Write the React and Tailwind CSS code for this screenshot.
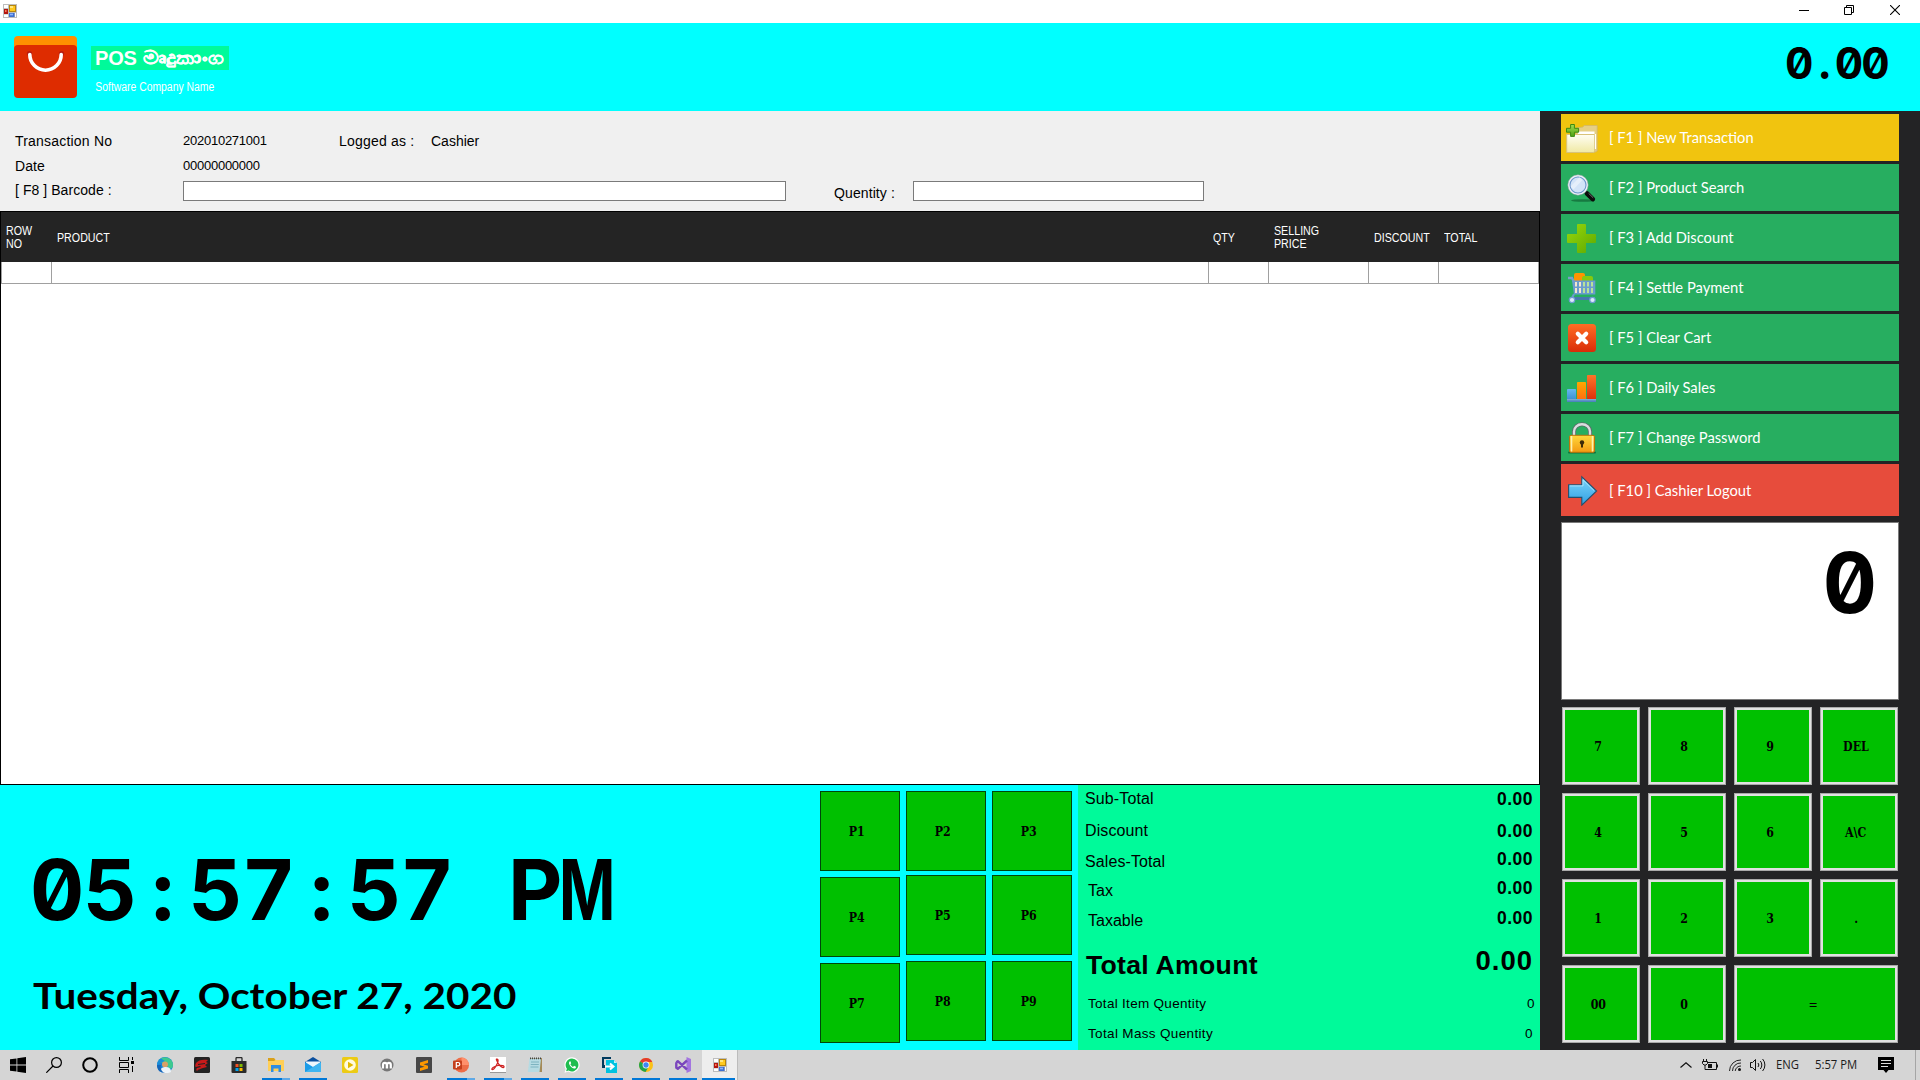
import React from 'react';

const SANS = "font-['Liberation_Sans',sans-serif]";

/* ---------- title bar ---------- */
function FormIcon({ className }) {
  return (
    <svg className={className} viewBox="0 0 14 14">
      <rect width="14" height="14" fill="#bdbdbd" />
      <rect x="1" y="1" width="4" height="3" fill="#fff" />
      <rect x="1" y="10.5" width="4" height="2.5" fill="#fff" />
      <rect x="12" y="9" width="1" height="4" fill="#fff" />
      <rect x="1" y="5" width="4" height="5" fill="#b3160f" />
      <rect x="2" y="6" width="1.5" height="2" fill="#ff7a5c" />
      <rect x="6" y="1" width="7" height="7" fill="#b8860b" />
      <rect x="7" y="2" width="5" height="5" fill="#ffc91f" />
      <rect x="7" y="2" width="3" height="2" fill="#ffe680" />
      <rect x="6" y="9" width="5.5" height="4" fill="#3f6fd1" />
      <rect x="7" y="9.7" width="3" height="1.6" fill="#8db5fa" />
    </svg>
  );
}

function TitleBar() {
  return (
    <div className="flex h-[23px] shrink-0 items-start justify-between bg-white pl-[3px] pr-5">
      <FormIcon className="mt-1 size-[14px]" />
      <div className="mt-[5px] flex gap-[35px]">
        <svg className="size-[10px]" viewBox="0 0 10 10"><path d="M0 5.5h10" stroke="#000" /></svg>
        <svg className="size-[10px]" viewBox="0 0 10 10" fill="none" stroke="#000"><path d="M.5 2.5h7v7h-7zM2.5 2.500v-2h7v7h-2" /></svg>
        <svg className="ml-[1px] size-[10px]" viewBox="0 0 10 10"><path d="M0 0l10 10M10 0L0 10" stroke="#000" strokeWidth="1.1" /></svg>
      </div>
    </div>
  );
}

/* ---------- header ---------- */
function Header() {
  return (
    <div className="flex h-[88px] shrink-0 items-start bg-[#00ffff] pl-[14px] pr-8">
      <svg className="mt-[13px] h-[62px] w-[63px]" viewBox="0 0 63 62">
        <rect width="63" height="30" rx="4" fill="#ff9000" />
        <path d="M0 13a4 4 0 0 1 4-4h55a4 4 0 0 1 4 4v45a4 4 0 0 1-4 4H4a4 4 0 0 1-4-4z" fill="#de2c00" />
        <circle cx="15.500" cy="17.500" r="2.600" fill="#b81c10" />
        <circle cx="47.500" cy="17.500" r="2.600" fill="#b81c10" />
        <path d="M15.800 18.500a15.700 15.700 0 0 0 31.400 0" fill="none" stroke="#fff" strokeWidth="3.600" strokeLinecap="round" />
      </svg>
      <div className={`ml-[14px] mt-[23px] flex flex-col items-start text-white ${SANS}`}>
        <div className="flex h-6 w-[138px] items-center whitespace-nowrap bg-[#00fa9a] pl-[4px] text-[20px] font-bold leading-6">
          <span className="tracking-[-0.2px]">POS</span>
          <span className="ml-[6px] origin-left scale-x-[1.22] text-[18px] [-webkit-text-stroke:0.2px_white]">මෘදුකාංග</span>
        </div>
        <div className="mt-[11px] origin-left scale-x-[0.865] whitespace-nowrap pl-[5px] text-[12px] leading-3">Software Company Name</div>
      </div>
      <div className="ml-auto mt-4 font-[Inter,sans-serif] text-[44px] font-bold leading-[48px] tracking-[-1.8px] tabular-nums slashed-zero">
        0<span className="pl-[7px] pr-[6px]">.</span>00
      </div>
    </div>
  );
}

/* ---------- transaction form ---------- */
function TransactionForm() {
  return (
    <div className={`flex h-[100px] shrink-0 bg-[#f0f0f0] pl-[15px] text-[14px] leading-5 text-black ${SANS}`}>
      <div className="w-[168px] pt-5">
        <div className="tracking-[0.2px]">Transaction No</div>
        <div className="mt-[5px] tracking-[0.1px]">Date</div>
        <div className="mt-[4px] tracking-[0.06px]">[ F8 ] Barcode :</div>
      </div>
      <div className="w-[651px] pt-5">
        <div className="flex">
          <span className="w-[156px] text-[13px] tracking-[-0.25px]">202010271001</span>
          <span className="w-[92px] tracking-[0.2px]">Logged as :</span>
          <span>Cashier</span>
        </div>
        <div className="mt-[5px] text-[13px] tracking-[-0.25px]">00000000000</div>
        <input aria-label="Barcode" className="mt-[5px] block h-5 w-[603px] border border-[#7a7a7a] bg-white" />
      </div>
      <div className="flex w-[79px] items-end pb-2 tracking-[0.1px]">Quentity :</div>
      <input aria-label="Quantity" className="mt-[70px] h-5 w-[291px] border border-[#7a7a7a] bg-white" />
    </div>
  );
}

/* ---------- cart table ---------- */
function Head({ children, first }) {
  return (
    <div className={`flex items-center ${first ? 'pl-[5px]' : 'pl-[6px]'} pt-[2px] text-[12px] leading-[13px] text-white`}>
      <span className="origin-left scale-x-[0.89]">{children}</span>
    </div>
  );
}

function CartTable() {
  const cols = 'grid grid-cols-[50px_1157px_60px_100px_70px_101px]';
  const rowCols = 'grid grid-cols-[50px_1157px_60px_100px_70px_100px]';
  return (
    <div className={`flex h-[574px] shrink-0 flex-col border border-black bg-white ${SANS}`}>
      <div className={`${cols} h-[50px] bg-[#242424]`}>
        <Head first>ROW<br />NO</Head>
        <Head>PRODUCT</Head>
        <Head first>QTY</Head>
        <Head>SELLING<br />PRICE</Head>
        <Head>DISCOUNT</Head>
        <Head>TOTAL</Head>
      </div>
      <div className={`${rowCols} h-[22px] border-b border-l border-[#a0a0a0]`}>
        {[0, 1, 2, 3, 4, 5].map((i) => (
          <div key={i} className="border-r border-[#a0a0a0]" />
        ))}
      </div>
    </div>
  );
}

/* ---------- bottom area ---------- */
function Clock() {
  return (
    <div className="w-[820px] text-black">
      <div className="ml-[30px] mt-[57px] whitespace-nowrap font-[Inter,sans-serif] text-[84px] font-bold leading-[96px] tracking-[-1.4px] tabular-nums slashed-zero [word-spacing:34px]">
        05<span className="px-[15.8px]">:</span>57<span className="px-[15.8px]">:</span>57 P<span className="-ml-[2px] inline-block origin-left scale-x-[0.72]">M</span>
      </div>
      <div className="ml-[33px] mt-[35px] w-max origin-left scale-x-[1.093] whitespace-nowrap font-[Lato,sans-serif] text-[37px] font-bold leading-[44px]">
        Tuesday, October 27, 2020
      </div>
    </div>
  );
}

function PButton({ children }) {
  return (
    <button className="flex size-20 items-center justify-center border border-[#00460a] bg-[#00c000] pr-[6px] pt-[2px] font-['DejaVu_Serif',serif] text-[12px] font-bold text-black">
      <span className="scale-x-[0.92]">{children}</span>
    </button>
  );
}

function QuickPad() {
  return (
    <div className="flex w-[258px] gap-[6px] pt-[6px]">
      {[['P1', 'P4', 'P7'], ['P2', 'P5', 'P8'], ['P3', 'P6', 'P9']].map((col, i) => (
        <div key={i} className={i === 0 ? 'flex flex-col gap-[6px]' : 'flex flex-col gap-[6px] [&>*:nth-child(2)]:-mt-[2px]'}>
          {col.map((p) => <PButton key={p}>{p}</PButton>)}
        </div>
      ))}
    </div>
  );
}

function Totals() {
  return (
    <div className={`flex w-[462px] justify-between bg-[#00fa9a] text-[16px] leading-6 text-black ${SANS}`}>
      <div className="pl-[7px]">
        <div className="mt-[2px] tracking-[0.13px]">Sub-Total</div>
        <div className="mt-[8px] tracking-[0.1px]">Discount</div>
        <div className="mt-[7px] tracking-[0.1px]">Sales-Total</div>
        <div className="ml-[3px] mt-[5px]">Tax</div>
        <div className="ml-[3px] mt-[6px]">Taxable</div>
        <div className="ml-[1px] mt-[20px] text-[26.67px] font-bold tracking-[0.25px]">Total Amount</div>
        <div className="ml-[3px] mt-[15px] text-[13.5px] tracking-[0.3px]">Total Item Quentity</div>
        <div className="ml-[3px] mt-[6px] text-[13.5px] tracking-[0.34px]">Total Mass Quentity</div>
      </div>
      <div className="pr-[7px] text-right font-bold tracking-[0.5px]">
        <div className="mt-[2px] text-[17.500px]">0.00</div>
        <div className="mt-[8px] text-[17.500px]">0.00</div>
        <div className="mt-[4px] text-[17.500px]">0.00</div>
        <div className="mt-[5px] text-[17.500px]">0.00</div>
        <div className="mt-[6px] text-[17.500px]">0.00</div>
        <div className="mt-[19px] text-[27.500px] tracking-[1px]">0.00</div>
        <div className="-mr-[2px] mt-[19px] text-[13.5px] font-normal">0</div>
        <div className="mt-[6px] text-[13.5px] font-normal">0</div>
      </div>
    </div>
  );
}

/* ---------- side menu icons ---------- */
function Gradient({ id, from, to }) {
  return (
    <linearGradient id={id} x1="0" y1="0" x2="0" y2="1">
      <stop offset="0" stopColor={from} />
      <stop offset="1" stopColor={to} />
    </linearGradient>
  );
}

const icons = {
  folder: (
    <>
      <defs><Gradient id="fo" from="#fffef4" to="#f0e9a4" /><Gradient id="fp" from="#a5dd4e" to="#4fa315" /></defs>
      <path d="M17 5l1-1.500h13.200V29l-2.200 1.200H10V6z" fill="#e6cf85" stroke="#d3b868" strokeWidth=".8" />
      <path d="M12 9.500h16.500v5H12z" fill="#fff" />
      <path d="M.7 12.500h28V29l-1 1.500H.7z" fill="url(#fo)" stroke="#d8c37a" />
      <path d="M29.500 12v15" stroke="#fff" strokeWidth="1.200" />
      <path d="M4.600 2.500h3.800V6.300h4.200v3.900H8.400v4.200H4.600v-4.200H.5V6.300h4.100z" fill="url(#fp)" stroke="#3f8a12" />
    </>
  ),
  search: (
    <>
      <ellipse cx="17" cy="28.500" rx="12" ry="1.300" fill="#177a41" />
      <path d="M18.500 19l3.200 3" stroke="#b8c0c8" strokeWidth="2" />
      <path d="M21 21.500l5.800 5.600" stroke="#0b0b0b" strokeWidth="4.600" strokeLinecap="round" />
      <path d="M22.600 21.300l4.600 4.500" stroke="#8a8a8a" strokeWidth=".8" />
      <circle cx="12" cy="13" r="9.300" fill="#c9def5" stroke="#eef2f6" strokeWidth="1.800" />
      <circle cx="12" cy="13" r="8" fill="#d3e4f8" stroke="#6f97cc" strokeWidth="1.100" />
      <path d="M6 16L15 6.600" stroke="#eef5fd" strokeWidth="4" opacity=".7" />
      <circle cx="12" cy="13" r="10.200" fill="none" stroke="#8d99a5" strokeWidth=".5" />
    </>
  ),
  plus: (
    <>
      <defs><linearGradient id="pl" x1="0" y1="0" x2="1" y2="1"><stop offset="0" stopColor="#98d80b" /><stop offset="1" stopColor="#5da800" /></linearGradient></defs>
      <path d="M12 2h7a1 1 0 0 1 1 1v9h9a1 1 0 0 1 1 1v7a1 1 0 0 1-1 1h-9v9a1 1 0 0 1-1 1h-7a1 1 0 0 1-1-1v-9H2a1 1 0 0 1-1-1v-7a1 1 0 0 1 1-1h9V3a1 1 0 0 1 1-1z" fill="url(#pl)" />
    </>
  ),
  cart: (
    <>
      <rect x="8" y="1" width="11" height="10" rx="2" fill="#ff9400" />
      <rect x="16" y="4" width="11" height="8" rx="2" fill="#86c90e" />
      <path d="M2 6h4l2 4" fill="none" stroke="#7b9fca" strokeWidth="2.400" />
      <path d="M6 8.500h23.300v14H8z" fill="#6b9bcf" />
      <path d="M10 10v4.500M14 10v4.500M10 16v5M14 16v5" stroke="#f3e6cf" strokeWidth="2" />
      <path d="M18 10v4.500M22 10v4.500M26 10v4.500M18 16v5M22 16v5M26 16v5" stroke="#b8e29a" strokeWidth="2" />
      <path d="M8 22l-2 4" stroke="#6b9bcf" strokeWidth="2" />
      <rect x="5" y="25" width="22" height="3" fill="#4678ae" />
      <circle cx="6" cy="28" r="2.700" fill="#dcebfb" stroke="#6f9bd2" strokeWidth="1.200" />
      <circle cx="26.500" cy="28" r="2.700" fill="#dcebfb" stroke="#6f9bd2" strokeWidth="1.200" />
    </>
  ),
  clear: (
    <>
      <defs><Gradient id="cl" from="#ff6d24" to="#d92c08" /></defs>
      <rect x="2" y="2" width="28" height="28" rx="3.500" fill="url(#cl)" />
      <path d="M11.800 11.800l8.400 8.400M20.200 11.800l-8.400 8.400" stroke="#fff" strokeWidth="4.200" strokeLinecap="round" />
    </>
  ),
  sales: (
    <>
      <defs><Gradient id="b1" from="#65b7f0" to="#3d8fd1" /><Gradient id="b2" from="#ffa800" to="#ff6e10" /><Gradient id="b3" from="#ff7428" to="#dc300a" /></defs>
      <rect x="1" y="17" width="9" height="10.500" rx=".8" fill="url(#b1)" />
      <rect x="11" y="10" width="9" height="17.500" rx=".8" fill="url(#b2)" />
      <rect x="21" y="3" width="9" height="24.500" rx=".8" fill="url(#b3)" />
      <rect x="1" y="27" width="29" height="3" fill="#4d86bd" />
      <rect x="1" y="27.300" width="29" height="1" fill="#8db4dc" />
    </>
  ),
  lock: (
    <>
      <defs><Gradient id="lk" from="#ffd83c" to="#f39a12" /></defs>
      <rect x="2" y="29.500" width="28" height="2" rx="1" fill="#14713c" />
      <path d="M8 14V9.500a8 7.300 0 0 1 16 0V14" fill="none" stroke="#5d6a6a" strokeWidth="4" />
      <path d="M8 14V9.500a8 7.300 0 0 1 16 0V14" fill="none" stroke="#d9dede" strokeWidth="2.400" />
      <rect x="3.500" y="13.300" width="25" height="17" rx="1.500" fill="url(#lk)" stroke="#b9750a" />
      <path d="M5.500 14v15.500M26.500 14v15.500" stroke="#fdf0b0" strokeWidth="1.600" />
      <circle cx="16" cy="20.500" r="2.200" fill="#3c2a08" />
      <path d="M16 20v5.500" stroke="#3c2a08" strokeWidth="2" />
    </>
  ),
  arrow: (
    <>
      <defs><Gradient id="ar" from="#7fd6fb" to="#2f9fe2" /></defs>
      <path d="M2.600 10.700h13.200V2.800L30.600 17 15.800 31.200v-7.800H2.600z" fill="url(#ar)" stroke="#23506e" strokeWidth="1.100" />
      <path d="M3.800 11.900h13.200V5.800L28 16.500" fill="none" stroke="#b6ecff" strokeWidth=".8" />
    </>
  ),
};

function MenuButton({ icon, color, tall, children }) {
  return (
    <button className={`flex ${tall ? 'h-[52px]' : 'h-[47px]'} w-[338px] items-center pl-[5px] text-left font-[Lato,sans-serif] text-[14.72px] text-white ${color}`}>
      <svg className="size-8" viewBox="0 0 32 32">{icons[icon]}</svg>
      <span className="ml-[11px] whitespace-pre">{children}</span>
    </button>
  );
}

function Key({ children, wide }) {
  return (
    <button className={`flex h-[78px] items-center justify-center border border-[#a9a9a9] bg-[#e1e1e1] p-[2px] ${wide ? 'col-span-2' : ''}`}>
      <span className="flex size-full items-center justify-center bg-[#00c000] pr-[6px] pt-[2px] font-['DejaVu_Serif',serif] text-[12px] font-bold text-black">
        <span className="scale-x-[0.92]">{children}</span>
      </span>
    </button>
  );
}

function SidePanel() {
  const green = 'bg-[#27ae60]';
  return (
    <div className="w-[380px] bg-[#232325] pl-[21px] pt-[3px]">
      <div className="flex flex-col gap-[3px]">
        <MenuButton icon="folder" color="bg-[#f1c40f]">[ F1 ] New Transaction</MenuButton>
        <MenuButton icon="search" color={green}>[ F2 ] Product Search</MenuButton>
        <MenuButton icon="plus" color={green}>[ F3 ] Add Discount</MenuButton>
        <MenuButton icon="cart" color={green}>[ F4 ] Settle Payment</MenuButton>
        <MenuButton icon="clear" color={green}>[ F5 ] Clear Cart</MenuButton>
        <MenuButton icon="sales" color={green}>[ F6 ] Daily Sales</MenuButton>
        <MenuButton icon="lock" color={green}>[ F7 ] Change Password</MenuButton>
        <MenuButton icon="arrow" color="bg-[#e74c3c]" tall>[ F10 ] Cashier Logout</MenuButton>
      </div>
      <div className="mt-[6px] h-[178px] w-[338px] border border-[#7a7a7a] bg-white pr-[21px] pt-3 text-right font-[Inter,sans-serif] text-[84px] font-bold leading-[96px] tabular-nums text-black slashed-zero">0</div>
      <div className="ml-[1px] mt-[7px] grid w-[336px] grid-cols-4 gap-2">
        {['7', '8', '9', 'DEL', '4', '5', '6', 'A\\C', '1', '2', '3', '.', '00', '0'].map((k) => <Key key={k}>{k}</Key>)}
        <Key wide><span className="font-normal">=</span></Key>
      </div>
    </div>
  );
}

/* ---------- taskbar ---------- */
function Task({ children, open, split }) {
  return (
    <div className="flex w-[37px] flex-col items-center">
      <svg className="mt-[7px] size-4" viewBox="0 0 16 16">{children}</svg>
      {open && (
        <div className="mt-auto flex h-[2px] w-7 bg-[#0078d7]">
          {split && <div className="ml-auto h-full w-2 bg-[#5ea9e6]" />}
        </div>
      )}
    </div>
  );
}

function Taskbar() {
  return (
    <div className="flex h-[30px] shrink-0 bg-[#d5d5d5]">
      <div className="flex w-[146px] items-start pt-[7px]">
        <svg className="ml-[10px] size-4" viewBox="0 0 16 16"><path d="M0 2.300l6.500-.9v6.200H0zM7.300 1.300L16 0v7.600H7.300zM0 8.400h6.500v6.200L0 13.700zM7.300 8.400H16V16l-8.700-1.300z" /></svg>
        <svg className="ml-5 size-4" viewBox="0 0 16 16" fill="none" stroke="#000" strokeWidth="1.200"><circle cx="10.500" cy="5.500" r="4.900" /><path d="M7 9L.3 15.700" /></svg>
        <svg className="ml-5 size-4" viewBox="0 0 16 16"><circle cx="8" cy="8" r="6.800" fill="none" stroke="#000" strokeWidth="2" /></svg>
        <svg className="ml-5 h-4 w-[17px]" viewBox="0 0 17 16" fill="none" stroke="#000"><path d="M1.500 0v3.500h9V0M1.500 5.500h9v5h-9zM1.500 16v-3.500h9V16M14.500 0v3M14.500 9v6" /><rect x="13" y="4" width="3" height="3" fill="#000" stroke="none" /></svg>
      </div>
      <Task>
        <circle cx="8" cy="8" r="8" fill="#1683d8" />
        <path d="M2 3a8 8 0 0 1 14 5c0 3-2 4-4 4C10 8 7 5 1 6z" fill="#3ec98f" />
        <path d="M4 1.500A8 8 0 0 0 0 8l8-4z" fill="#1a8fd6" />
        <circle cx="8" cy="7.500" r="3" fill="#d9a066" />
        <path d="M3 15c0-4 3-5 6-5s5 2 5 4-3 2-6 2-5 0-5-1z" fill="#eef3f8" />
        <path d="M0 8c0 5 3 8 8 8-3-1-5-4-4-8z" fill="#1565b8" />
      </Task>
      <Task>
        <rect width="16" height="16" rx="1.500" fill="#222" />
        <path d="M2 6c2-3 7-4 12-3l-2 2 2 1-3 2 2 2-4 1c-2 1-5 1-6 3-1-1-1-2 0-3l4-1-1-1-4 1c-1 0-1-2 0-4z" fill="#c81a1a" />
        <path d="M4 7.500l7-1" stroke="#222" />
      </Task>
      <Task>
        <path d="M5 4V1.500a1 1 0 0 1 1-1h4a1 1 0 0 1 1 1V4" fill="none" stroke="#2b2b2b" strokeWidth="1.300" />
        <path d="M.5 4h15v11a1 1 0 0 1-1 1h-13a1 1 0 0 1-1-1z" fill="#2b2b2b" />
        <path d="M4.500 7h3v3h-3z" fill="#f25022" /><path d="M8.500 7h3v3h-3z" fill="#7fba00" />
        <path d="M4.500 11h3v3h-3z" fill="#00a4ef" /><path d="M8.500 11h3v3h-3z" fill="#ffb900" />
      </Task>
      <Task open split>
        <path d="M0 1h6l1.500 2H16v11H0z" fill="#ffcf57" /><path d="M0 1h6l1.500 2L6 4H0z" fill="#d9a01c" />
        <path d="M3 15V8h10v7h-2.500v-3.500h-5V15z" fill="#2f8ee0" />
      </Task>
      <Task open>
        <path d="M0 5l8-5 8 5v3H0z" fill="#0a4f9e" /><path d="M1 4.500h14V9l-7 4-7-4z" fill="#eef6fd" />
        <path d="M0 5l8 5 8-5v10H0z" fill="#1a9be8" /><path d="M0 15L16 5v10z" fill="#50c0f5" opacity=".7" />
      </Task>
      <Task>
        <rect width="16" height="16" rx="1.500" fill="#eccb14" /><circle cx="8" cy="8" r="5.800" fill="#fffbe0" />
        <path d="M6 4.800L11.500 8 6 11.200z" fill="#e2b900" />
      </Task>
      <Task>
        <circle cx="8" cy="8" r="6.500" fill="#777" /><path d="M4 11.500V7.800a1.900 1.900 0 0 1 3.800 0V11.500M8 11.500V7.800a1.900 1.900 0 0 1 3.800 0V11.500" fill="none" stroke="#fff" strokeWidth="2.200" />
      </Task>
      <Task>
        <rect width="16" height="16" rx="1" fill="#474747" />
        <path d="M12 3v3L7.500 7.300 12 8.800v2.700L4 14v-3l4.500-1.300L4 8.200V5.500z" fill="#ff9800" />
      </Task>
      <Task open split>
        <circle cx="8.500" cy="8" r="7.500" fill="#ed6c47" /><path d="M8.500.5A7.500 7.500 0 0 1 16 8H8.500z" fill="#ff8f6b" />
        <rect y="3.500" width="9" height="9" rx="1" fill="#c43e1c" />
        <path d="M3.300 11V5.500h1.800a1.600 1.600 0 0 1 0 3.400H3.500" fill="none" stroke="#fff" strokeWidth="1.200" />
      </Task>
      <Task open split>
        <rect width="16" height="16" fill="#fff" /><path d="M0 15.500h16" stroke="#999" />
        <path d="M7 2c2 0 1 4-1 7-1 2-3 4-4 3.500S4 9 8 8.500s6.500.3 6 1.600S10 10 8 6 6 2 7 2z" fill="none" stroke="#cf2121" strokeWidth="1.200" />
      </Task>
      <Task open>
        <path d="M4 1h11v14H3z" fill="#a48a57" /><path d="M2.500 1.500h11.500L12.500 15H.8z" fill="#b5dbe3" />
        <path d="M4 5h8M3.800 7.500h8M3.500 10h8" stroke="#7db3c0" /><path d="M3 1.300h11" stroke="#444" strokeWidth="1.800" strokeDasharray="1 1" />
      </Task>
      <Task open>
        <path d="M8 .3a7.600 7.600 0 1 1-3.700 14.200L.5 15.700l1.200-3.700A7.600 7.600 0 0 1 8 .3z" fill="#fff" />
        <path d="M8 1.400a6.500 6.500 0 1 1-3.400 12.100l-2.500.7.800-2.500A6.500 6.500 0 0 1 8 1.400z" fill="#1fbd4f" />
        <path d="M5.500 4.500c-2 2 2 7 4.800 7 1.300 0 1.800-1 1.700-1.800l-2-1-1 1.200C8 9.500 6.700 8.200 6.400 7.300l.8-1-.8-2z" fill="#fff" />
      </Task>
      <Task open>
        <path d="M1 0h9v2H3v8H1z" fill="#003a5d" /><path d="M5 3h8l3 3v10H5z" fill="#00c3e0" />
        <path d="M13 3v3h3z" fill="#bdf3fb" /><path d="M1 8h3v3H1z" fill="#003a5d" />
        <path d="M4 9.500h8M9 6.500l3.500 3L9 12.500" fill="none" stroke="#fff" strokeWidth="2" />
      </Task>
      <Task open>
        <circle cx="8" cy="8" r="7" fill="#fbc116" />
        <path d="M8 8L2 4.400A7 7 0 0 1 14.300 5H8z" fill="#e33b2e" /><path d="M2 4.400A7 7 0 0 0 7.500 15l2.700-4.500L8 8z" fill="#1fa34d" />
        <circle cx="8" cy="8" r="3.400" fill="#fff" /><circle cx="8" cy="8" r="2.700" fill="#3f86f2" />
      </Task>
      <Task open>
        <path d="M11.500 0L16 2v12l-4.500 2z" fill="#a374e0" />
        <path d="M1.300 5.200v5.600l1.500 1L12 3.500M1.300 5.200l1.500-1L12 12.500" fill="none" stroke="#7a45bd" strokeWidth="2.400" strokeLinejoin="round" />
      </Task>
      <div className="ml-[1px] flex w-9 flex-col border-r border-[#bcbcbc] bg-[#eeeeee]">
        <FormIcon className="ml-[11px] mt-2 size-[14px]" />
        <div className="mt-auto h-[2px] w-[33px] bg-[#0078d7]" />
      </div>
      <div className="ml-auto flex h-[30px] items-center border-r border-[#a5a5a5] font-['Open_Sans',sans-serif] text-[12px] text-[#1c1c1c]">
        <svg className="h-[6px] w-3" viewBox="0 0 12 6"><path d="M.5 5.500L6 .8l5.500 4.700" fill="none" stroke="#111" strokeWidth="1.200" /></svg>
        <svg className="ml-[10px] h-3 w-4" viewBox="0 0 16 12" fill="none" stroke="#111"><path d="M5.500 3.500h9v7h-9M15.500 5.500v3M1.500 0v2.500M4.500 0v2.500M.5 2.500h5v2L4 6H2L.5 4.500zM3 6v4.500h3" /><path d="M6 5h4v4H6z" fill="#111" stroke="none" /></svg>
        <svg className="ml-[11px] size-3" viewBox="0 0 12 12" fill="none" stroke="#222" strokeWidth="1"><path d="M.5 12A11 11 0 0 1 12 1M3.500 12A8 8 0 0 1 12 4M6.200 12A5.500 5.500 0 0 1 12 7" /><circle cx="10.500" cy="10.500" r="1.500" fill="#111" stroke="none" /></svg>
        <svg className="ml-[9px] h-[14px] w-4" viewBox="0 0 16 14" fill="none" stroke="#111"><path d="M.5 4.500h2l3-3v11l-3-3h-2zM8 5a3 3 0 0 1 0 4M10.300 3a6 6 0 0 1 0 8M12.600 1a9 9 0 0 1 0 12" /></svg>
        <span className="ml-[10px] w-[39px] origin-left scale-x-[0.94]">ENG</span>
        <span className="w-[63px] origin-left scale-x-[0.94] whitespace-nowrap">5:57 PM</span>
        <svg className="mr-5 h-4 w-[17px]" viewBox="0 0 17 16"><path d="M0 0h16v13h-5.500L8 16l-2.500-3H0z" /><path d="M3 3.500h10M3 6.500h10M3 9.500h7" stroke="#ddd" /></svg>
      </div>
      <div className="w-1" />
    </div>
  );
}

export default function App() {
  return (
    <div className="flex h-[1080px] w-[1920px] flex-col overflow-hidden bg-white">
      <TitleBar />
      <Header />
      <div className="flex h-[939px] shrink-0">
        <div className="flex w-[1540px] flex-col">
          <TransactionForm />
          <CartTable />
          <div className="flex h-[265px] bg-[#00ffff]">
            <Clock />
            <QuickPad />
            <Totals />
          </div>
        </div>
        <SidePanel />
      </div>
      <Taskbar />
    </div>
  );
}
